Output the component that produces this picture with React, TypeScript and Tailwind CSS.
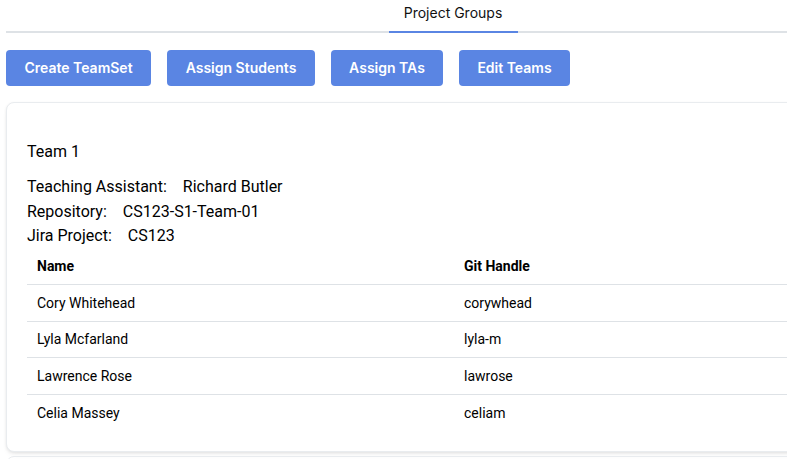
const members = [
  { name: "Cory Whitehead", git: "corywhead" },
  { name: "Lyla Mcfarland", git: "lyla-m" },
  { name: "Lawrence Rose", git: "lawrose" },
  { name: "Celia Massey", git: "celiam" },
];

const actions = [
  { label: "Create TeamSet", w: "w-[145px]" },
  { label: "Assign Students", w: "w-[148px]" },
  { label: "Assign TAs", w: "w-[112px]" },
  { label: "Edit Teams", w: "w-[111px]" },
];

export default function App() {
  return (
    <div className="h-[459px] w-[787px] overflow-hidden bg-white font-['Inter',sans-serif] text-black">
      <div className="ml-[6px] w-[894px]">
        {/* tabs */}
        <div className="flex h-[33px] justify-center border-b-2 border-[#dee2e6]">
          <button className="-mb-[2px] w-[129px] border-b-2 border-[#5a85e3] pb-[7px] text-[14px] text-[#111]">
            Project Groups
          </button>
        </div>

        <div className="mt-[17px] flex gap-4">
          {actions.map((a) => (
            <button
              key={a.label}
              className={`${a.w} h-9 rounded-[4px] bg-[#5a85e3] pb-[1px] text-[14px] font-semibold text-white`}
            >
              {a.label}
            </button>
          ))}
        </div>

        <div className="mt-4 rounded-lg border border-[#e9ecef] bg-white px-5 pb-5 pt-[37px] font-['Roboto',sans-serif] shadow-[0_1px_3px_rgba(0,0,0,0.08),0_4px_6px_-2px_rgba(0,0,0,0.06)]">
          <div className="mb-[11px] text-[16px] leading-6">Team 1</div>
          <div className="text-[16px] leading-[24.5px]">
            <div>
              Teaching Assistant:<span className="ml-4">Richard Butler</span>
            </div>
            <div>
              Repository:<span className="ml-4">CS123-S1-Team-01</span>
            </div>
            <div>
              Jira Project:<span className="ml-4">CS123</span>
            </div>
          </div>
          <table className="w-full border-collapse text-[14px]">
            <thead>
              <tr className="h-[36px] border-b border-[#dee2e6]">
                <th className="w-[427px] px-[10px] text-left font-bold">Name</th>
                <th className="px-[10px] text-left font-bold">Git Handle</th>
              </tr>
            </thead>
            <tbody>
              {members.map((m, i) => (
                <tr
                  key={m.git}
                  className={`h-[36.5px] ${i < members.length - 1 ? "border-b border-[#dee2e6]" : ""}`}
                >
                  <td className="px-[10px] pt-[1px]">{m.name}</td>
                  <td className="px-[10px] pt-[1px]">{m.git}</td>
                </tr>
              ))}
            </tbody>
          </table>
        </div>
        <div className="mt-1 h-8 rounded-lg border border-[#e9ecef]" />
      </div>
    </div>
  );
}
